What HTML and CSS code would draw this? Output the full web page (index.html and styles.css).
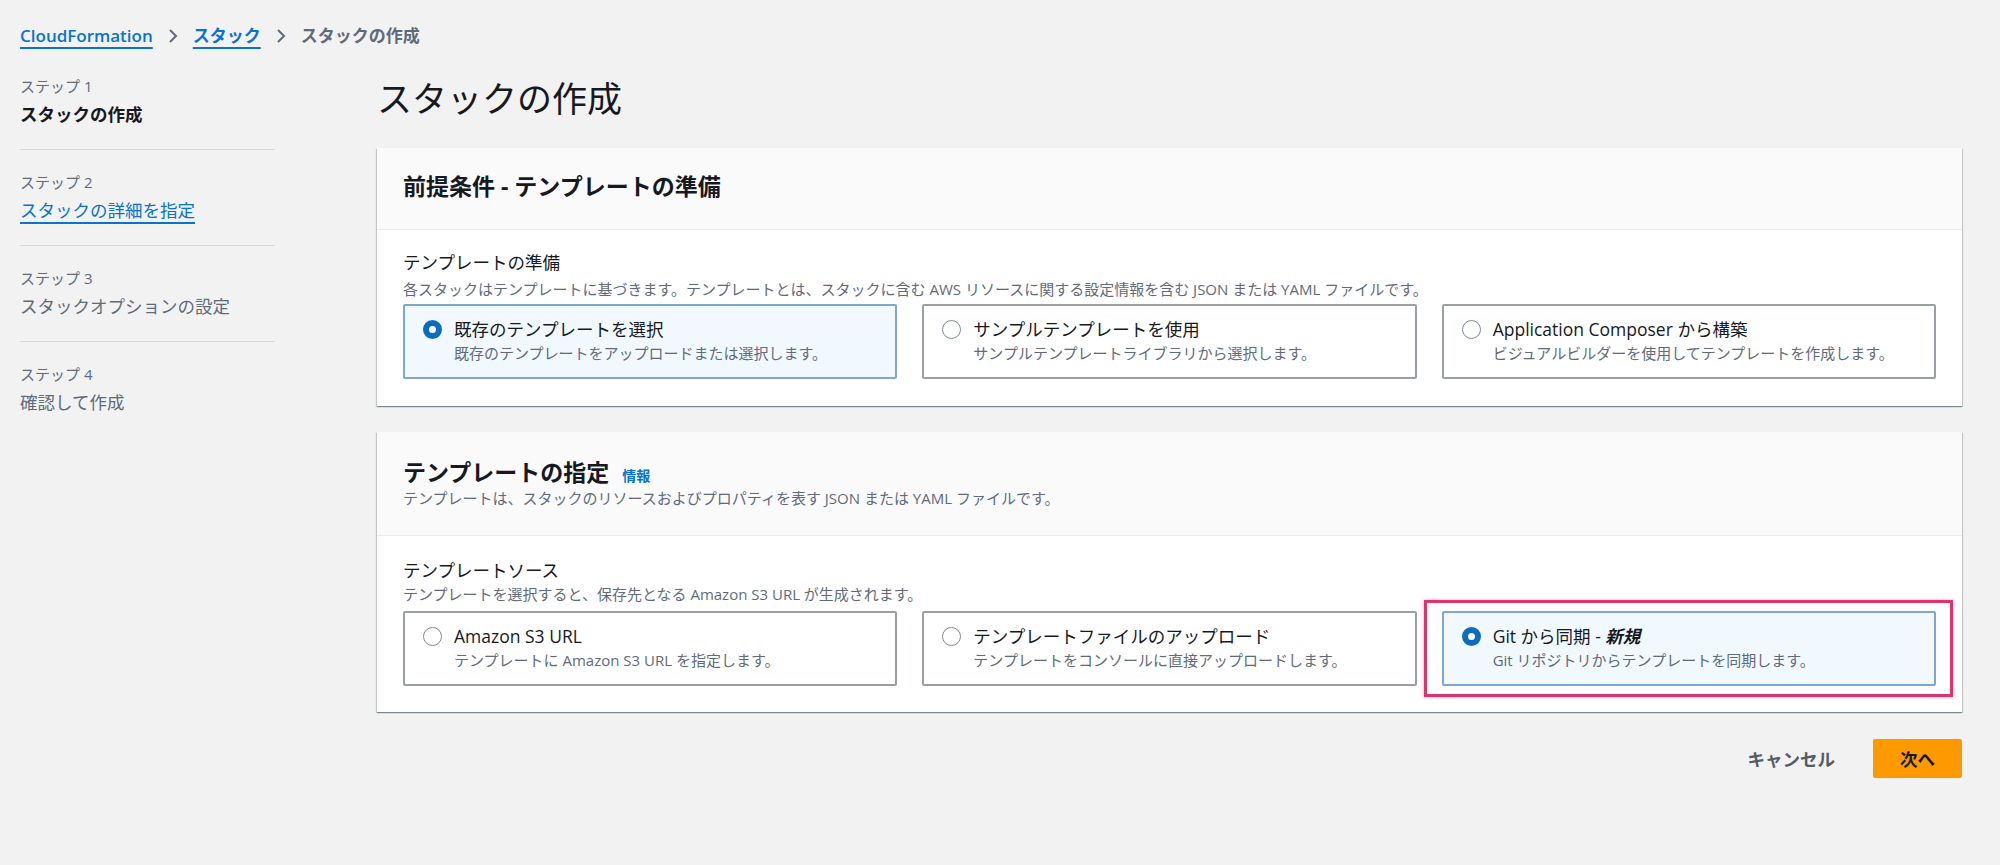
FILE: index.html
```html
<!DOCTYPE html>
<html lang="ja">
<head>
<meta charset="utf-8">
<title>スタックの作成</title>
<link rel="stylesheet" href="styles.css">
</head>
<body>
<div class="page">
  <nav class="breadcrumb">
    <a class="crumb-link" href="#">CloudFormation</a>
    <svg class="chev" width="12" height="16" viewBox="0 0 12 16"><polyline points="3,2 9,8 3,14" fill="none" stroke="#5f6b7a" stroke-width="2"/></svg>
    <a class="crumb-link" href="#">スタック</a>
    <svg class="chev" width="12" height="16" viewBox="0 0 12 16"><polyline points="3,2 9,8 3,14" fill="none" stroke="#5f6b7a" stroke-width="2"/></svg>
    <span class="crumb-current">スタックの作成</span>
  </nav>

  <div class="layout">
    <aside class="steps">
      <div class="step">
        <div class="step-label">ステップ 1</div>
        <div class="step-title current">スタックの作成</div>
      </div>
      <div class="step">
        <div class="step-label">ステップ 2</div>
        <div class="step-title"><a class="step-link" href="#">スタックの詳細を指定</a></div>
      </div>
      <div class="step">
        <div class="step-label">ステップ 3</div>
        <div class="step-title muted">スタックオプションの設定</div>
      </div>
      <div class="step last">
        <div class="step-label">ステップ 4</div>
        <div class="step-title muted">確認して作成</div>
      </div>
    </aside>

    <main class="main">
      <h1 class="page-title">スタックの作成</h1>

      <section class="panel">
        <header class="panel-header first">
          <h2 class="panel-h2">前提条件 - テンプレートの準備</h2>
        </header>
        <div class="panel-body">
          <div class="field-label">テンプレートの準備</div>
          <div class="field-desc">各スタックはテンプレートに基づきます。テンプレートとは、スタックに含む AWS リソースに関する設定情報を含む JSON または YAML ファイルです。</div>
          <div class="tiles">
            <div class="tile selected">
              <span class="radio on"></span>
              <div class="tile-text">
                <div class="tile-title">既存のテンプレートを選択</div>
                <div class="tile-desc">既存のテンプレートをアップロードまたは選択します。</div>
              </div>
            </div>
            <div class="tile">
              <span class="radio"></span>
              <div class="tile-text">
                <div class="tile-title">サンプルテンプレートを使用</div>
                <div class="tile-desc">サンプルテンプレートライブラリから選択します。</div>
              </div>
            </div>
            <div class="tile">
              <span class="radio"></span>
              <div class="tile-text">
                <div class="tile-title">Application Composer から構築</div>
                <div class="tile-desc">ビジュアルビルダーを使用してテンプレートを作成します。</div>
              </div>
            </div>
          </div>
        </div>
      </section>

      <section class="panel">
        <header class="panel-header second">
          <div class="h2-row">
            <h2 class="panel-h2">テンプレートの指定</h2>
            <a class="info" href="#">情報</a>
          </div>
          <div class="header-desc">テンプレートは、スタックのリソースおよびプロパティを表す JSON または YAML ファイルです。</div>
        </header>
        <div class="panel-body second">
          <div class="field-label">テンプレートソース</div>
          <div class="field-desc">テンプレートを選択すると、保存先となる Amazon S3 URL が生成されます。</div>
          <div class="tiles">
            <div class="tile">
              <span class="radio"></span>
              <div class="tile-text">
                <div class="tile-title">Amazon S3 URL</div>
                <div class="tile-desc">テンプレートに Amazon S3 URL を指定します。</div>
              </div>
            </div>
            <div class="tile">
              <span class="radio"></span>
              <div class="tile-text">
                <div class="tile-title">テンプレートファイルのアップロード</div>
                <div class="tile-desc">テンプレートをコンソールに直接アップロードします。</div>
              </div>
            </div>
            <div class="tile selected highlighted">
              <span class="radio on"></span>
              <div class="tile-text">
                <div class="tile-title">Git から同期 - <em class="new">新規</em></div>
                <div class="tile-desc">Git リポジトリからテンプレートを同期します。</div>
              </div>
            </div>
          </div>
        </div>
      </section>

      <div class="actions">
        <button class="btn-link">キャンセル</button>
        <button class="btn-primary">次へ</button>
      </div>
    </main>
  </div>
</div>
</body>
</html>
```
FILE: styles.css
```css
* { box-sizing: border-box; }

html, body {
  margin: 0;
  padding: 0;
  background: #f2f2f2;
}

body {
  font-family: "Open Sans", "Noto Sans CJK JP", sans-serif;
  color: #16191f;
  font-size: 17.5px;
}

.page {
  padding: 24px 38px 0 20px;
}

/* breadcrumb */
.breadcrumb {
  display: flex;
  align-items: center;
  height: 24px;
  line-height: 24px;
  gap: 14px;
  font-size: 17px;
}

.crumb-link {
  color: #0972d3;
  text-decoration: underline;
  text-underline-offset: 5px;
  text-decoration-thickness: 1.5px;
  font-weight: 600;
}

.chev { display: block; }

.crumb-current {
  color: #5f6b7a;
  font-weight: 700;
}

/* layout */
.layout {
  display: grid;
  grid-template-columns: 255px 1fr;
  column-gap: 102px;
  margin-top: 26px;
}

/* steps */
.step {
  padding: 20px 0 21px;
  border-bottom: 1px solid #d5dbdb;
}
.step:first-child { padding-top: 0; }
.step.last { border-bottom: none; }

.step-label {
  font-size: 15px;
  line-height: 24px;
  color: #5f6b7a;
}

.step-title {
  margin-top: 2px;
  line-height: 28px;
  font-size: 17.5px;
  color: #5f6b7a;
}

.step-title.current {
  color: #16191f;
  font-weight: 700;
}

.step-link {
  color: #0972d3;
  text-decoration: underline;
  text-underline-offset: 5px;
  text-decoration-thickness: 1.5px;
}

/* main */
.page-title {
  margin: 4px 0 28px;
  font-size: 35px;
  line-height: 42px;
  font-weight: 400;
  color: #16191f;
}

.panel {
  background: #ffffff;
  box-shadow: 0 1px 1px 0 rgba(0, 28, 36, 0.3), 1px 1px 1px 0 rgba(0, 28, 36, 0.15), -1px 1px 1px 0 rgba(0, 28, 36, 0.15);
  margin-bottom: 26px;
}

.panel-header {
  background: #fafafa;
  border-bottom: 1px solid #eaeded;
  padding: 23px 26px 28px;
}

.panel-header.second {
  padding: 25px 26px 26px;
}

.panel-h2 {
  margin: 0;
  font-size: 23px;
  line-height: 30px;
  font-weight: 700;
}

.h2-row {
  display: flex;
  align-items: baseline;
  gap: 13px;
}

.info {
  color: #0972d3;
  font-size: 14px;
  font-weight: 700;
  text-decoration: none;
}

.header-desc {
  font-size: 15px;
  line-height: 22px;
  color: #5f6b7a;
}

.panel-body {
  padding: 20px 26px 27px;
}

.panel-body.second {
  padding: 22px 26px 26px;
}

.field-label {
  font-size: 17.5px;
  line-height: 24px;
}

.field-desc {
  margin-top: 4px;
  font-size: 15px;
  line-height: 22px;
  color: #5f6b7a;
}

.panel-body.second .field-desc { margin-top: 1px; }

.tiles {
  margin-top: 4px;
  display: grid;
  grid-template-columns: repeat(3, 1fr);
  column-gap: 25px;
}

.panel-body.second .tiles { margin-top: 6px; }

.tile {
  position: relative;
  display: flex;
  align-items: flex-start;
  gap: 12px;
  height: 75px;
  padding: 11px 18px 12px;
  border: 2px solid #9a9fa6;
  border-radius: 2px;
  background: #ffffff;
}

.tile.selected {
  background: #f1f8fe;
  border-color: #7ea7cb;
}

.tile.highlighted::after {
  content: "";
  position: absolute;
  top: -13px;
  bottom: -13px;
  left: -20px;
  right: -19px;
  border: 3px solid #e0336d;
  box-shadow: 0 0 3px rgba(224, 51, 109, 0.45);
  pointer-events: none;
}

.radio {
  flex: none;
  width: 19px;
  height: 19px;
  margin-top: 3px;
  border-radius: 50%;
  border: 1.5px solid #7d8998;
  background: #ffffff;
}

.radio.on {
  border: 6px solid #0a6bbf;
}

.tile-title {
  font-size: 17.5px;
  line-height: 24px;
  color: #16191f;
  white-space: nowrap;
}

.tile-desc {
  font-size: 15px;
  line-height: 24px;
  color: #5f6b7a;
  white-space: nowrap;
}

.new {
  font-style: italic;
  font-weight: 600;
}

/* actions */
.actions {
  display: flex;
  justify-content: flex-end;
  align-items: center;
  gap: 16px;
  margin-top: 27px;
}

.btn-link {
  border: none;
  background: transparent;
  font-family: inherit;
  font-size: 17.5px;
  font-weight: 700;
  color: #545b64;
  padding: 0 22px;
  height: 39px;
}

.btn-primary {
  border: none;
  background: #ff9900;
  border-radius: 2px;
  font-family: inherit;
  font-size: 17.5px;
  font-weight: 700;
  color: #16191f;
  height: 39px;
  width: 89px;
}
```
